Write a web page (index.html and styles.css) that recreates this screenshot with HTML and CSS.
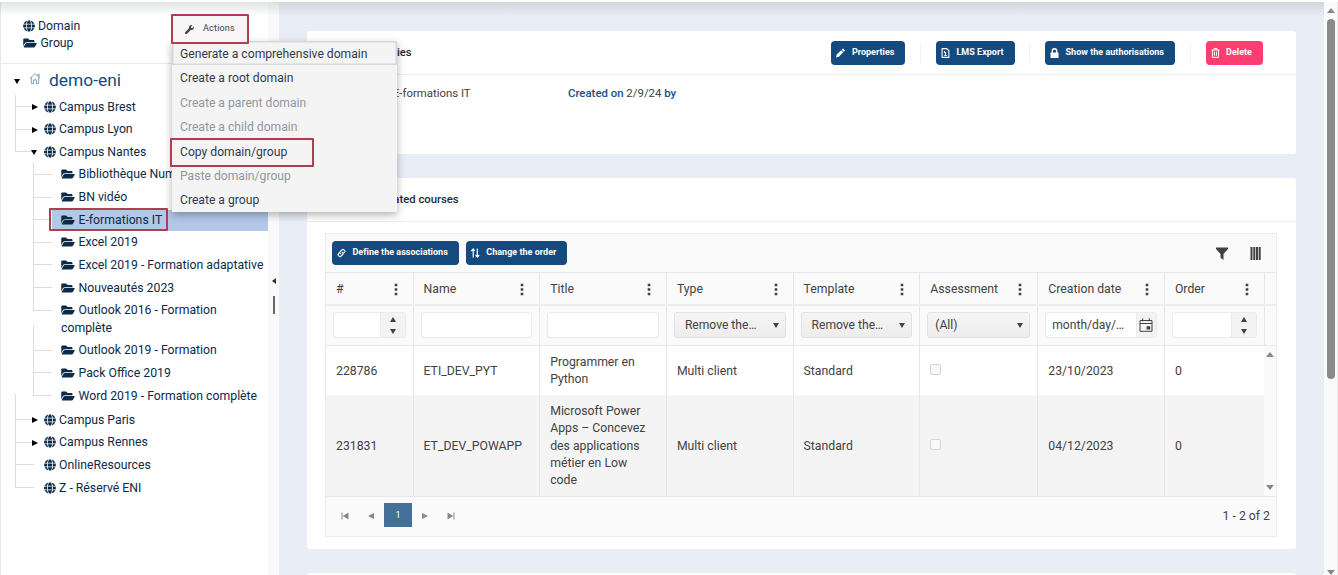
FILE: index.html
```html
<!DOCTYPE html>
<html lang="en">

	<head>
		<meta charset="utf-8" />
		<title>Domains and groups</title>
		<link rel="stylesheet" href="styles.css">
	</head>

	<body>
		<svg class="symbols">
			<symbol id="globe" viewBox="0 0 496 512"><path d="M336.5 160C322 70.7 287.8 8 248 8s-74 62.7-88.5 152h177zM152 256c0 22.2 1.2 43.5 3.3 64h185.3c2.1-20.5 3.3-41.8 3.3-64s-1.2-43.5-3.3-64H155.3c-2.1 20.5-3.3 41.8-3.3 64zm324.7-96c-28.6-67.9-86.5-120.4-158-141.6 24.4 33.8 41.2 84.7 50 141.6h108zM177.2 18.4C105.8 39.6 47.8 92.1 19.3 160h108c8.7-56.9 25.5-107.8 49.9-141.6zM487.4 192H372.7c2.1 21 3.3 42.5 3.3 64s-1.2 43-3.3 64h114.6c5.5-20.5 8.6-41.8 8.6-64s-3.1-43.5-8.5-64zM120 256c0-21.5 1.2-43 3.3-64H8.6C3.2 212.5 0 233.8 0 256s3.2 43.5 8.6 64h114.6c-2-21-3.2-42.5-3.2-64zm39.5 96c14.5 89.3 48.7 152 88.5 152s74-62.7 88.5-152h-177zm159.3 141.6c71.4-21.2 129.4-73.7 158-141.6h-108c-8.8 56.9-25.6 107.8-50 141.6zM19.3 352c28.6 67.9 86.5 120.4 158 141.6-24.4-33.8-41.2-84.7-50-141.6h-108z"/></symbol>
			<symbol id="folder" viewBox="0 0 576 512"><path d="M572.7 292.1L500.3 416.2A64 64 0 0 1 445 448H45c-18.5 0-30-20-20.7-36l72.4-124.2A64 64 0 0 1 152 256h400c18.5 0 30 20 20.7 36.1zM152 224h328v-48c0-26.5-21.5-48-48-48H272l-64-64H48C21.5 64 0 85.5 0 112v278l69-118.4C86.2 242.2 118 224 152 224z"/></symbol>
			<symbol id="wrench" viewBox="0 0 512 512"><path d="M507.73 109.1c-2.24-9.03-13.54-12.09-20.12-5.51l-74.36 74.36-67.88-11.31-11.31-67.88 74.36-74.36c6.62-6.62 3.43-17.9-5.66-20.16-47.38-11.74-99.55.91-136.58 37.93-39.64 39.64-50.55 97.1-34.05 147.2L18.74 402.76c-24.99 24.99-24.99 65.51 0 90.5 24.99 24.99 65.51 24.99 90.5 0l213.21-213.21c50.12 16.71 107.47 5.68 147.37-34.22 37.07-37.07 49.7-89.32 37.91-136.73z"/></symbol>
			<symbol id="home" viewBox="0 0 14 14"><path d="M1 7L7 1.3 13 7M10.5 4.2V2h1.3v3.3M2.7 6v7h2.6V8.6h3.4V13h2.6V6" fill="none" stroke="currentColor"/></symbol>
			<symbol id="pencil" viewBox="0 0 10 10"><path d="M0 10l.8-3.2 4.9-4.9 2.4 2.4-4.9 4.9zM6.3 1.3L7.2.4q.5-.5 1 0l1.4 1.4q.5.5 0 1l-.9.9z"/></symbol>
			<symbol id="file" viewBox="0 0 8 10"><path d="M.6.6h4.6L7.4 2.8v6.6H.6zM3 3v1.5h1V7.5M2.8 7.5h2.5" fill="none" stroke="currentColor" stroke-width="1.1"/></symbol>
			<symbol id="lock" viewBox="0 0 9 10"><path d="M.5 4.5h8V10h-8z"/><path d="M2.3 5V3a2.2 2.2 0 0 1 4.4 0v2" fill="none" stroke="currentColor" stroke-width="1.4"/></symbol>
			<symbol id="trash" viewBox="0 0 8 10"><path d="M0 2h8M2.6 2V.6h2.8V2M1 2v7.4h6V2M3 3.7v4M5 3.7v4" fill="none" stroke="currentColor"/></symbol>
			<symbol id="link" viewBox="0 0 10 10"><path d="M4.4 6.1L3.5 5.2q-.8-.8 0-1.6l2.3-2.3q.8-.8 1.6 0l1.1 1.1q.8.8 0 1.6L7.5 5M5.6 3.9l.9.9q.8.8 0 1.6L4.2 8.7q-.8.8-1.6 0L1.5 7.6q-.8-.8 0-1.6l1-1" fill="none" stroke="currentColor" stroke-width="1.3"/></symbol>
			<symbol id="sort" viewBox="0 0 9 10"><path d="M2.2 9.5V1M.3 3L2.2 1l1.6 2M6.3.5V9M4.6 7l1.7 2 1.9-2" fill="none" stroke="currentColor" stroke-width="1.2"/></symbol>
			<symbol id="filter" viewBox="0 0 12 13"><path d="M0 .5h12V2L7.500 7v6l-3-2.200V7L0 2z"/></symbol>
			<symbol id="columns" viewBox="0 0 11 13"><path d="M.5 0h2v13h-2zM3.3 0h2v13h-2zM6 0h2v13H6zM8.7 0h2v13h-2z"/></symbol>
			<symbol id="dots" viewBox="0 0 4 13"><path d="M.7.8h2.600v2.400H.7zM.7 5.300h2.600v2.400H.7zM.7 9.800h2.600v2.400H.7z"/></symbol>
			<symbol id="calendar" viewBox="0 0 14 14"><path d="M1 2.5h12v10.8H1zM1 5.5h12M3.7.3v3M10.3.3v3" fill="none" stroke="currentColor"/><path d="M7.6 8.3h3.7v3.2H7.6z"/></symbol>
			<symbol id="first" viewBox="0 0 8 8"><path d="M.5.5h1v7h-1zM7.5.5v7L1.8 4z"/></symbol>
		</svg>

		<div class="page">
			<div class="sidebar">
				<div class="legend">
					<div><svg class="globe"><use href="#globe"/></svg>Domain</div>
					<div><svg class="folder"><use href="#folder"/></svg>Group</div>
				</div>
				<div class="root"><i class="tri down"></i><svg class="home"><use href="#home"/></svg>demo-eni</div>
				<ul class="tree">
					<li><i class="tri right"></i><svg class="globe"><use href="#globe"/></svg>Campus Brest</li>
					<li><i class="tri right"></i><svg class="globe"><use href="#globe"/></svg>Campus Lyon</li>
					<li><i class="tri down"></i><svg class="globe"><use href="#globe"/></svg>Campus Nantes
						<ul>
							<li><svg class="folder"><use href="#folder"/></svg>Bibliothèque Num</li>
							<li><svg class="folder"><use href="#folder"/></svg>BN vidéo</li>
							<li class="selected"><svg class="folder"><use href="#folder"/></svg>E-formations IT<b class="frame"></b></li>
							<li><svg class="folder"><use href="#folder"/></svg>Excel 2019</li>
							<li><svg class="folder"><use href="#folder"/></svg>Excel 2019 - Formation adaptative</li>
							<li><svg class="folder"><use href="#folder"/></svg>Nouveautés 2023</li>
							<li><svg class="folder"><use href="#folder"/></svg>Outlook 2016 - Formation<br>complète</li>
							<li><svg class="folder"><use href="#folder"/></svg>Outlook 2019 - Formation</li>
							<li><svg class="folder"><use href="#folder"/></svg>Pack Office 2019</li>
							<li><svg class="folder"><use href="#folder"/></svg>Word 2019 - Formation complète</li>
						</ul>
					</li>
					<li><i class="tri right"></i><svg class="globe"><use href="#globe"/></svg>Campus Paris</li>
					<li><i class="tri right"></i><svg class="globe"><use href="#globe"/></svg>Campus Rennes</li>
					<li><svg class="globe"><use href="#globe"/></svg>OnlineResources</li>
					<li><svg class="globe"><use href="#globe"/></svg>Z - Réservé ENI</li>
				</ul>
			</div>
			<div class="splitter"><i class="tri left"></i><span></span></div>

			<div class="main">
				<div class="card info">
					<div class="card-head">
						<h3>Properties</h3>
						<div class="tools">
							<a class="btn"><svg><use href="#pencil"/></svg>Properties</a>
							<a class="btn"><svg><use href="#file"/></svg>LMS Export</a>
							<a class="btn"><svg><use href="#lock"/></svg>Show the authorisations</a>
							<a class="btn delete"><svg><use href="#trash"/></svg>Delete</a>
						</div>
					</div>
					<div class="details">
						<p><b>Name</b> <span>E-formations IT</span></p>
						<p><b>Created on</b> 2/9/24 <b>by</b></p>
					</div>
				</div>

				<div class="card courses">
					<div class="card-head"><h3>Associated courses</h3></div>
					<div class="grid">
						<div class="toolbar">
							<a class="btn"><svg><use href="#link"/></svg>Define the associations</a>
							<a class="btn"><svg><use href="#sort"/></svg>Change the order</a>
							<svg class="filter"><use href="#filter"/></svg>
							<svg class="columns"><use href="#columns"/></svg>
						</div>
						<table>
							<colgroup>
								<col class="c-id"><col class="c-std"><col class="c-std"><col class="c-std"><col class="c-std"><col class="c-assess"><col class="c-std"><col class="c-order"><col>
							</colgroup>
							<tr class="head">
								<th><div>#<svg><use href="#dots"/></svg></div></th>
								<th><div>Name<svg><use href="#dots"/></svg></div></th>
								<th><div>Title<svg><use href="#dots"/></svg></div></th>
								<th><div>Type<svg><use href="#dots"/></svg></div></th>
								<th><div>Template<svg><use href="#dots"/></svg></div></th>
								<th><div>Assessment<svg><use href="#dots"/></svg></div></th>
								<th><div>Creation date<svg><use href="#dots"/></svg></div></th>
								<th><div>Order<svg><use href="#dots"/></svg></div></th>
								<th></th>
							</tr>
							<tr class="filters">
								<td><div class="field"><span></span><em class="spin"><i class="tri up"></i><i class="tri down"></i></em></div></td>
								<td><div class="field"></div></td>
								<td><div class="field"></div></td>
								<td><div class="field select">Remove the…<i class="tri down"></i></div></td>
								<td><div class="field select">Remove the…<i class="tri down"></i></div></td>
								<td><div class="field select all">(All)<i class="tri down"></i></div></td>
								<td><div class="field"><span>month/day/…</span><em class="date"><svg><use href="#calendar"/></svg></em></div></td>
								<td><div class="field"><span></span><em class="spin"><i class="tri up"></i><i class="tri down"></i></em></div></td>
								<td></td>
							</tr>
							<tr class="row">
								<td>228786</td>
								<td>ETI_DEV_PYT</td>
								<td>Programmer en Python</td>
								<td>Multi client</td>
								<td>Standard</td>
								<td><i class="check"></i></td>
								<td>23/10/2023</td>
								<td>0</td>
								<td class="scroll" rowspan="2"><div><i class="tri up"></i><i class="tri down"></i></div></td>
							</tr>
							<tr class="row alt">
								<td>231831</td>
								<td>ET_DEV_POWAPP</td>
								<td>Microsoft Power Apps – Concevez des applications métier en Low code</td>
								<td>Multi client</td>
								<td>Standard</td>
								<td><i class="check"></i></td>
								<td>04/12/2023</td>
								<td>0</td>
							</tr>
						</table>
						<div class="pager">
							<svg><use href="#first"/></svg>
							<i class="tri left"></i>
							<span class="current">1</span>
							<i class="tri right"></i>
							<svg class="last"><use href="#first"/></svg>
							<span class="total">1 - 2 of 2</span>
						</div>
					</div>
				</div>
				<div class="card next"></div>
			</div>

			<div class="scrollbar"><i class="tri up"></i><span></span><i class="tri down"></i></div>
		</div>

		<div class="topshade"></div>

		<div class="menu">
			<a class="focus">Generate a comprehensive domain</a>
			<a>Create a root domain</a>
			<a class="off">Create a parent domain</a>
			<a class="off">Create a child domain</a>
			<a>Copy domain/group<b class="frame"></b></a>
			<a class="off">Paste domain/group</a>
			<a>Create a group</a>
		</div>
		<div class="actions"><svg><use href="#wrench"/></svg>Actions</div>
	</body>

</html>
```

FILE: styles.css
```css
*{margin: 0;padding: 0;box-sizing: border-box;}
body{
	height: 575px;
	overflow: hidden;
	background: #fff;
	color: #0c2b49;
	font: 12.25px/17.4px Roboto, "Liberation Sans", sans-serif;
}
ul{list-style: none;}
svg{fill: currentColor;flex: none;}
.symbols{display: none;}
.page{
	display: flex;
	height: 575px;
	padding-top: 2px;
}

/* css triangles */
.tri{
	display: inline-block;
	flex: none;
	width: 0;
	height: 0;
	border: 3.5px solid transparent;
}
.tri.up{border-top: 0;border-bottom: 5px solid;}
.tri.down{border-bottom: 0;border-top: 5px solid;}
.tri.left{border-left: 0;border-right: 6px solid;}
.tri.right{border-right: 0;border-left: 6px solid;}

/* left tree */
.sidebar{
	width: 268px;
	border-left: 1px solid #e8e8e8;
	white-space: nowrap;
}
.legend{
	height: 62px;
	padding: 16px 0 0 22px;
	border-bottom: 1px solid #eaeaea;
}
.globe{
	width: 12px;
	height: 12px;
	margin-right: 3px;
	vertical-align: -2px;
}
.folder{
	width: 14px;
	height: 12px;
	margin-right: 3.5px;
	vertical-align: -2px;
}
.root{
	display: flex;
	align-items: center;
	height: 32px;
	padding: 2px 0 0 13px;
	font-size: 17.4px;
	color: #144a80;
}
.root .tri{color: #000;}
.home{
	width: 12px;
	height: 13px;
	margin: -5px 8px 0 9px;
	color: #6d93b5;
}
.tree{padding-left: 14px;}
.tree li{
	position: relative;
	padding: 2.62px 0;
}
.tree > li{padding-left: 29px;}
.tree > li > .tri{
	position: absolute;
	left: 17px;
	top: 8px;
	color: #000;
}
.tree > li > .tri.down{left: 16px;top: 9px;}
.tree li:before{
	content: "";
	position: absolute;
	left: 0;
	top: -15px;
	width: 18px;
	height: 25px;
	border: solid #ddd;
	border-width: 0 0 1px 1px;
}
.tree > li:first-child:before{top: -1px;height: 11px;}
.tree ul{
	margin: 2.62px 0 -1px -11px;
}
.tree ul li{padding-left: 28px;}
.tree ul li:before{left: 0;}
.tree ul li:first-child:before{top: -2px;height: 12px;}
.tree ul .selected{
	background: linear-gradient(#b3c7e7, #b3c7e7) 19px 1px / 100% 21px no-repeat;
}
.frame{
	position: absolute;
	border: 2px solid #ae3e52;
	border-radius: 1px;
}
.selected .frame{
	left: 16px;
	top: -1px;
	width: 119px;
	height: 23px;
}

.splitter{
	display: flex;
	flex-direction: column;
	align-items: center;
	width: 11px;
	padding-top: 276px;
	background: #fafafa;
	color: #333;
}
.splitter .tri{border-width: 3px 4px 3px 0;}
.splitter span{
	width: 2px;
	height: 18px;
	margin-top: 12px;
	background: #666;
}

/* right part */
.main{
	flex: 1;
	padding: 29px 28px 0;
	overflow: hidden;
	background: #e9edf6;
	color: #424242;
}
.card{
	margin-bottom: 24px;
	border-radius: 3px;
	background: #fff;
}
.info{height: 123px;}
.courses{height: 371px;}
.next{height: 40px;}
.card-head{
	display: flex;
	align-items: center;
	justify-content: space-between;
	height: 44px;
	padding: 0 33px 0 52px;
	border-bottom: 1px solid #f0f0f2;
}
.card-head h3{
	font-size: 11.3px;
	font-weight: 500;
	color: #212b40;
}
.tools{display: flex;}
.btn{
	display: flex;
	align-items: center;
	height: 24px;
	padding: 0 11px 0 5px;
	border-radius: 4px;
	background: #144a7e;
	color: #fff;
	font-size: 9px;
	font-weight: 700;
	letter-spacing: .02px;
	white-space: nowrap;
}
.btn svg{
	width: 9px;
	height: 10px;
	margin-right: 6.5px;
}
.tools .btn{margin-left: 30.5px;position: relative;}
.tools .btn + .btn:before{
	content: "";
	position: absolute;
	left: -16px;
	top: 3px;
	height: 19px;
	border-left: 1px solid #f2f2f2;
}
.btn.delete{background: #ff3d71;}
.details{
	display: grid;
	grid-template-columns: 217px 1fr;
	padding: 10px 0 0 44px;
	font-size: 11.4px;
}
.details b{color: #145087;font-weight: 500;}
.details p:first-child b{display: inline-block;width: 39px;}

.grid{
	margin: 11px 19px 0 18px;
	border: 1px solid #ececec;
	background: #fafafa;
}
.toolbar{
	display: flex;
	align-items: center;
	gap: 7px;
	height: 38px;
	padding: 0 15px 0 6px;
}
.filter{
	width: 12px;
	height: 13px;
	margin-left: auto;
}
.columns{
	width: 11px;
	height: 13px;
	margin-left: 15px;
}
table{
	width: 100%;
	table-layout: fixed;
	border-collapse: collapse;
}
.c-id{width: 87px;}
.c-std{width: 126.7px;}
.c-assess{width: 118px;}
.c-order{width: 100px;}
th, td{
	border-left: 1px solid #e6e6e6;
	font-weight: 400;
	text-align: left;
}
th:first-child, td:first-child{border-left: 0;}
.head{height: 32px;border-top: 1px solid #e8e8e8;}
.head th div{
	display: flex;
	align-items: center;
	justify-content: space-between;
	padding: 2px 15px 0 10px;
}
.head svg{width: 4px;height: 13px;}
.filters{
	height: 41px;
	border-top: 2px solid #ededed;
	border-bottom: 1px solid #e8e8e8;
}
.filters td{padding: 0 7px;}
.field{
	display: flex;
	align-items: center;
	justify-content: space-between;
	height: 26px;
	border: 1px solid #ebebeb;
	border-radius: 3px;
	background: #fff;
	overflow: hidden;
	white-space: nowrap;
}
.field span{padding-left: 6px;}
.field em{
	display: flex;
	flex-direction: column;
	align-items: center;
	justify-content: center;
	gap: 7px;
	width: 25px;
	height: 24px;
	border-left: 1px solid #ebebeb;
	background: #f3f3f3;
}
.field .date{width: 20px;}
.date svg{width: 14px;height: 14px;}
.select{
	padding: 0 6px 0 10px;
	border-color: #e2e2e2;
	background: linear-gradient(#f5f5f5, #ededed);
}
.filters .select, .field span{font-size: 12.1px;}
.select.all{padding-left: 7px;}
.row{height: 49px;background: #fff;}
.row td{padding: 8px 9px 6px 10px;}
.row.alt{height: 101px;background: #f4f4f4;}
.check{
	display: block;
	width: 11px;
	height: 11px;
	margin-top: -4px;
	border: 1px solid #d5d5d5;
	border-radius: 2px;
	background: #f8f8f8;
}
.row .scroll{
	padding: 0;
	border-left: 0;
	background: #fafafa;
	color: #888;
}
.scroll div{
	display: flex;
	flex-direction: column;
	align-items: center;
	justify-content: space-between;
	height: 138px;
}
.scroll .tri{border-left-width: 4.5px;border-right-width: 4.5px;}
.pager{
	display: flex;
	align-items: center;
	height: 40px;
	padding: 0 6px 0 15px;
	border-top: 1px solid #e6e6e6;
	color: #888;
}
.pager svg{width: 8px;height: 8px;}
.pager .left{margin: 0 10px 0 19px;}
.pager .right{margin: 0 19px 0 10px;}
.pager .last{transform: scaleX(-1);}
.current{
	width: 28px;
	height: 24px;
	margin-top: -3px;
	background: #446f99;
	color: #fff;
	font-size: 9px;
	line-height: 24px;
	text-align: center;
}
.total{margin-left: auto;color: #424242;}

.scrollbar{
	display: flex;
	flex-direction: column;
	align-items: center;
	width: 14px;
	padding-top: 6px;
	border-right: 1px solid #e8e8e8;
	background: #fafafa;
	color: #888;
}
.scrollbar .tri{border-left-width: 4.5px;border-right-width: 4.5px;}
.scrollbar span{
	width: 8px;
	height: 360px;
	margin: 6px 0 auto;
	border-radius: 4px;
	background: #8a8a8a;
}

/* shadow of the bar above the page */
.topshade{
	position: absolute;
	left: 0;
	top: 2px;
	width: 1324px;
	height: 14px;
	background: linear-gradient(rgba(120,130,130,.22), rgba(120,130,130,0));
}

/* actions popup */
.actions{
	position: absolute;
	left: 171px;
	top: 14px;
	display: flex;
	align-items: center;
	width: 78px;
	height: 30px;
	padding-left: 12px;
	border: 2px solid #ae3e52;
	border-radius: 1px;
	background: #f6f6f6;
	color: #424242;
	font-size: 9px;
	letter-spacing: .2px;
}
.actions svg{
	width: 9px;
	height: 9px;
	margin-right: 9px;
}
.menu{
	position: absolute;
	left: 172px;
	top: 41px;
	width: 225px;
	height: 171px;
	background: #f4f4f4;
	box-shadow: 0 3px 8px rgba(0,0,0,.3);
	color: #323b4e;
	font-size: 12.15px;
}
.menu a{
	position: relative;
	display: block;
	height: 24.4px;
	padding-left: 8px;
	line-height: 26px;
}
.menu .focus{box-shadow: inset 0 0 0 1.5px #d8d8d8;}
.menu .off{color: #93969f;}
.menu .frame{
	left: -2px;
	top: -1px;
	width: 144px;
	height: 29px;
}
```
